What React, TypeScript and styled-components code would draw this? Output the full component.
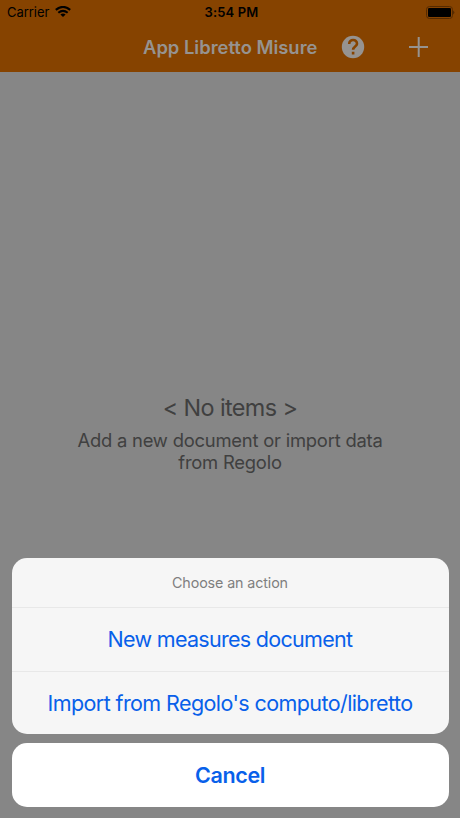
import React from 'react';
import styled, { createGlobalStyle } from 'styled-components';

const Global = createGlobalStyle`
  * { box-sizing: border-box; }
  body { margin: 0; font-family: Inter, "Liberation Sans", sans-serif; }
`;
const Screen = styled.main`
  width: 460px; height: 818px; position: relative; overflow: hidden;
  display: flex; flex-direction: column; background: #868686;
`;
const Header = styled.header`height: 71.5px; background: #864300;`;
const StatusBar = styled.div`
  height: 24px; display: grid; grid-template-columns: 1fr auto 1fr; align-items: center;
  padding: 0 5px 0 7px; color: #000; font-size: 13px;
`;
const Carrier = styled.div`display: flex; align-items: center; gap: 6px; letter-spacing: -.05px;`;
const Time = styled.div`font-weight: 600; letter-spacing: .15px; padding-left: 1px;`;
const Battery = styled.div`display: flex; justify-content: flex-end;`;
const NavBar = styled.div`
  height: 46px; display: flex; align-items: center; padding-left: 143px; color: #969390;
`;
const Title = styled.h1`
  margin: 0; width: 175px; font-size: 18.4px; font-weight: 600; white-space: nowrap;
`;
const IconButton = styled.button<{ $gap: number }>`
  border: 0; padding: 0; background: none; color: inherit; display: flex; margin-left: ${p => p.$gap}px;
`;
const Empty = styled.section`
  flex: 1; padding-top: 321px; text-align: center; color: #404040;
`;
const EmptyTitle = styled.div`font-size: 23.4px; line-height: 30px; letter-spacing: -.6px;`;
const EmptyText = styled.p`margin: 6px 0 0; font-size: 18.4px; line-height: 22px; letter-spacing: -.22px;`;
const Sheet = styled.div`
  position: absolute; left: 11.5px; right: 11.5px; bottom: 11.5px; display: grid; gap: 9px;
`;
const Group = styled.div`border-radius: 15px; overflow: hidden; background: #f6f6f6;`;
const Caption = styled.div`
  height: 49px; display: grid; place-items: center; color: #7f7f7f; font-size: 14.3px; letter-spacing: -.12px;
`;
const Action = styled.button<{ $bold?: boolean; $tracking: number }>`
  width: 100%; height: 63.5px; border: 0; border-top: ${p => p.$bold ? 0 : 1}px solid #e8e8e8;
  border-radius: ${p => p.$bold ? 15 : 0}px; background: ${p => p.$bold ? '#fff' : 'transparent'};
  padding: 0; font: ${p => p.$bold ? 600 : 400} 21.5px Inter, sans-serif; color: #0860ea;
  letter-spacing: ${p => p.$tracking}px;
`;

export default function App() {
  return (
    <Screen>
      <Global />
      <Header>
        <StatusBar>
          <Carrier><span>Carrier</span>
            <svg width="16" height="12" viewBox="0 0 16 12" fill="none" stroke="#000" strokeWidth="2.1">
              <path d="M.8 3.9Q8-2.1 15.2 3.9M3.3 6.8Q8 2.8 12.7 6.8" /><path d="M8 11L5.4 8.6Q8 6.4 10.6 8.6Z" fill="#000" stroke="none" />
            </svg>
          </Carrier>
          <Time>3:54 PM</Time>
          <Battery><svg width="29" height="13" viewBox="0 0 29 13"><rect x=".5" y=".5" width="26" height="12" rx="3" fill="none" stroke="#552a00"/><rect x="2" y="2" width="23" height="9" rx="1.3"/><path d="M27.3 4.5Q29.3 6.5 27.3 8.5Z" fill="#452200"/></svg></Battery>
        </StatusBar>
        <NavBar>
          <Title>App Libretto Misure</Title>
          <IconButton $gap={23} aria-label="Help"><svg width="24" height="24" viewBox="0 0 24 24"><circle cx="12" cy="12" r="11.2" fill="currentColor"/><path d="M8.2 9C8 3.4 16.3 3.9 16 8.8C15.8 11.5 12.1 11.5 12.1 14.8M12.1 16.7V19.4" fill="none" stroke="#864300" strokeWidth="2.6"/></svg></IconButton>
          <IconButton $gap={43} aria-label="Add"><svg width="20" height="20" viewBox="0 0 20 20" stroke="currentColor" strokeWidth="2"><path d="M10.7 0V20M1 10H20"/></svg></IconButton>
        </NavBar>
      </Header>
      <Empty><EmptyTitle>&lt; No items &gt;</EmptyTitle><EmptyText>Add a new document or import data<br />from Regolo</EmptyText></Empty>
      <Sheet>
        <Group>
          <Caption>Choose an action</Caption>
          <Action $tracking={-.7}>New measures document</Action>
          <Action $tracking={-.59}>Import from Regolo's computo/libretto</Action>
        </Group>
        <Action $bold $tracking={-.35}>Cancel</Action>
      </Sheet>
    </Screen>
  );
}
